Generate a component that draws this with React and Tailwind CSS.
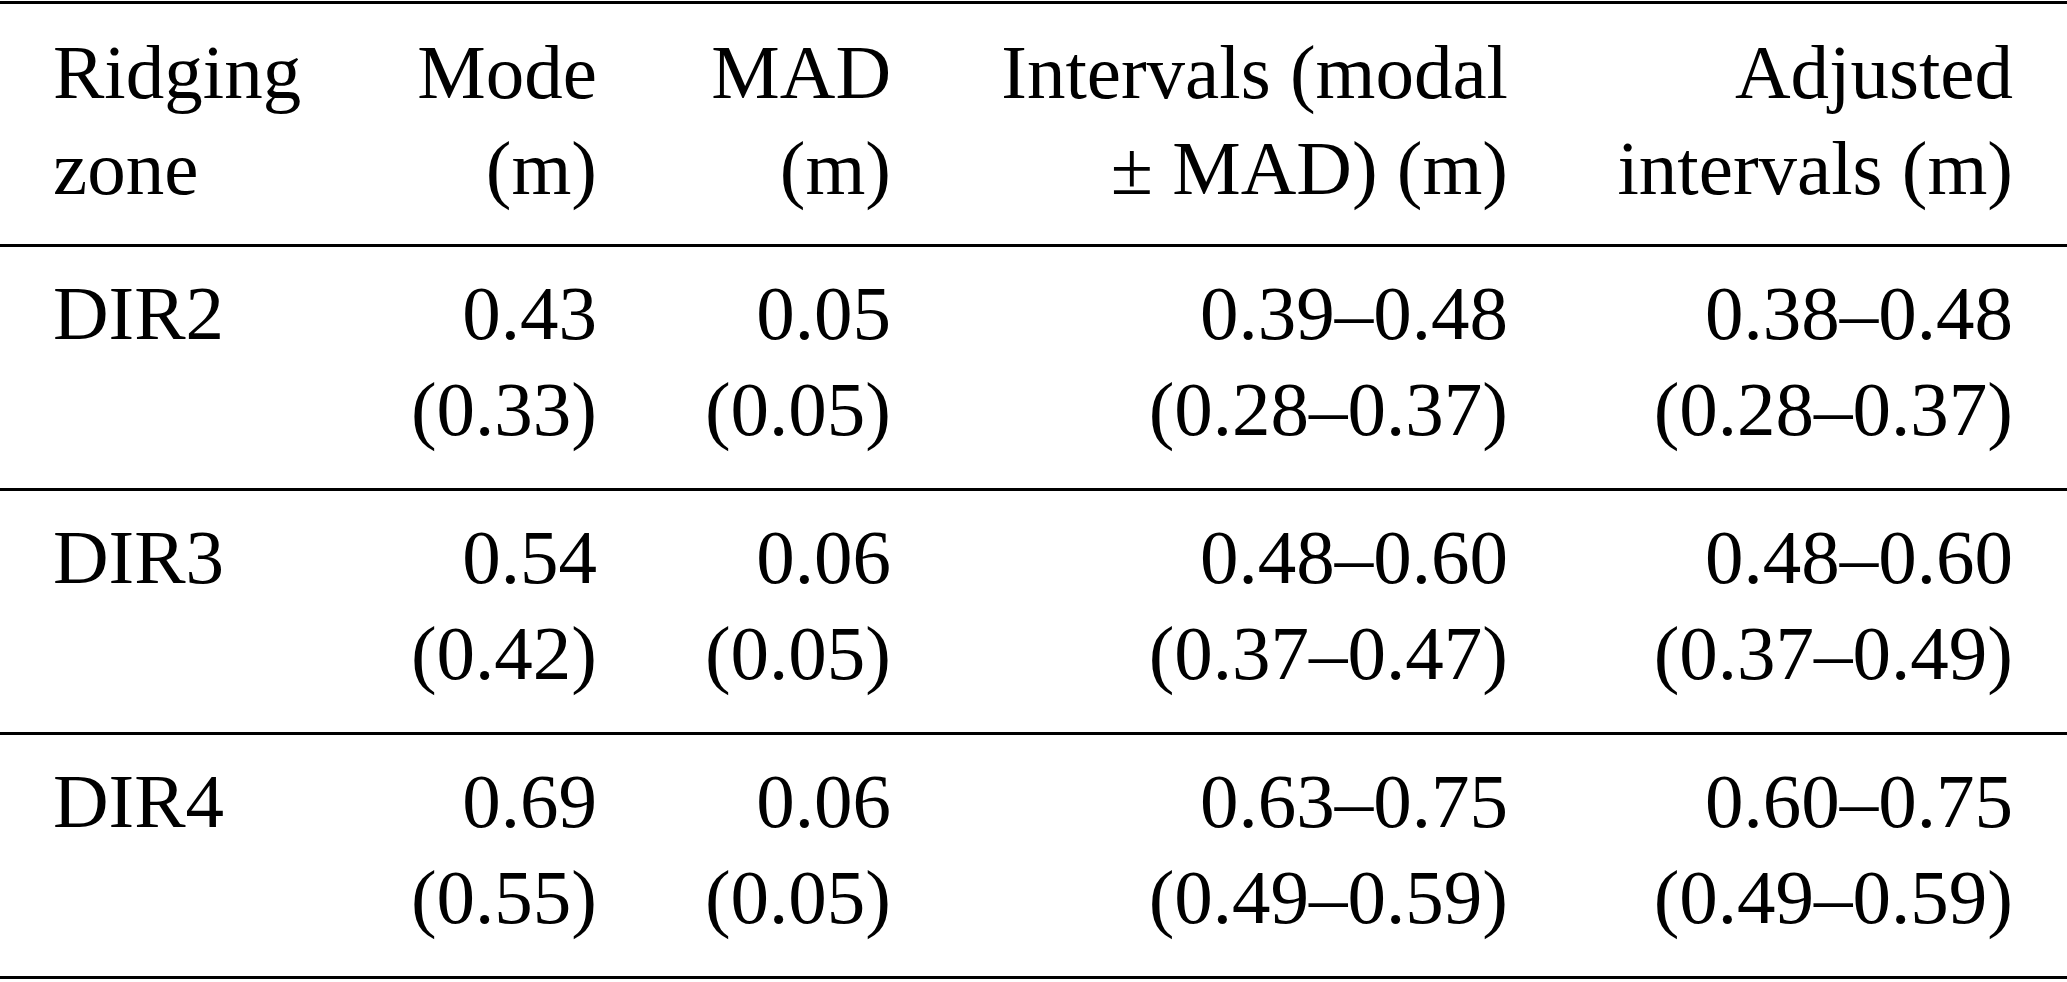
const header = [
  ["Ridging", "zone"],
  ["Mode", "(m)"],
  ["MAD", "(m)"],
  ["Intervals (modal", "± MAD) (m)"],
  ["Adjusted", "intervals (m)"],
];

const rows = [
  ["DIR2", ["0.43", "(0.33)"], ["0.05", "(0.05)"], ["0.39–0.48", "(0.28–0.37)"], ["0.38–0.48", "(0.28–0.37)"]],
  ["DIR3", ["0.54", "(0.42)"], ["0.06", "(0.05)"], ["0.48–0.60", "(0.37–0.47)"], ["0.48–0.60", "(0.37–0.49)"]],
  ["DIR4", ["0.69", "(0.55)"], ["0.06", "(0.05)"], ["0.63–0.75", "(0.49–0.59)"], ["0.60–0.75", "(0.49–0.59)"]],
];

const Row = ({ cells, className }) => (
  <div className={`grid grid-cols-[277px_267px_294px_617px_505px] px-[53px] ${className}`}>
    {cells.map((lines, i) => (
      <div key={i} className={i === 0 ? "text-left" : "text-right"}>
        {lines.map((l, j) => (
          <div key={j} className="whitespace-nowrap">{l}</div>
        ))}
      </div>
    ))}
  </div>
);

export default function App() {
  return (
    <div
      className="w-[2067px] h-[982px] bg-white text-black text-[77px] leading-[96px] pt-px"
      style={{ fontFamily: '"Liberation Serif", "Times New Roman", serif' }}
    >
      <div className="border-t-[3px] border-black">
        <Row cells={header} className="pt-[20px] pb-[28px] border-b-[3px] border-black" />
        {rows.map((r, i) => (
          <Row
            key={i}
            cells={[[r[0]], r[1], r[2], r[3], r[4]]}
            className="pt-[18px] pb-[31px] border-b-[3px] border-black"
          />
        ))}
      </div>
    </div>
  );
}
